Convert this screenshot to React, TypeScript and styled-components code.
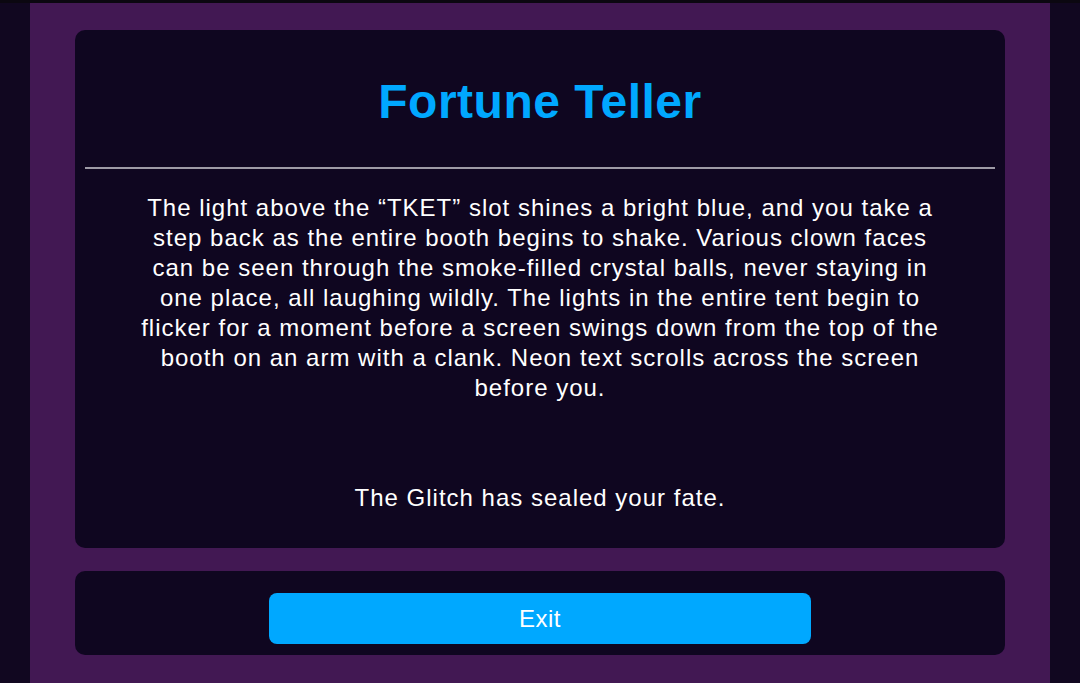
import React from 'react';
import styled, { createGlobalStyle } from 'styled-components';

const GlobalStyle = createGlobalStyle`
  html, body {
    margin: 0;
    padding: 0;
    background: #110720;
    font-family: "Liberation Sans", Arial, sans-serif;
  }
  * {
    box-sizing: border-box;
  }
`

const TopBar = styled.div`
  height: 3px;
  background: #0b0710;
`

const Frame = styled.main`
  width: 1020px;
  margin: 0 auto;
  padding: 27px 45px 0;
  height: 680px;
  overflow: hidden;
  background: #421853;
  display: flex;
  flex-direction: column;
  gap: 23px;
`

const Card = styled.section<{ $pad?: string }>`
  background: #0f0620;
  border-radius: 10px;
  padding: ${p => p.$pad || '0'};
  display: flex;
  flex-direction: column;
  align-items: center;
`

const Title = styled.h1`
  margin: 44px 0 0;
  height: 93px;
  color: #00a8ff;
  font-size: 48px;
  font-weight: 700;
  letter-spacing: 0.5px;
`

const Rule = styled.hr`
  align-self: stretch;
  margin: 0 10px;
  border: none;
  height: 2px;
  background: #9e9aa6;
`

const Story = styled.div`
  margin-top: 24px;
  color: #ffffff;
  font-size: 24px;
  line-height: 30px;
  letter-spacing: 1px;
  text-align: center;
`

const Line = styled.span`
  display: block;
  white-space: nowrap;
`

const Verdict = styled.p`
  margin: 80px 0 35px;
  color: #ffffff;
  font-size: 24px;
  line-height: 30px;
  letter-spacing: 1px;
  text-align: center;
`

const ExitButton = styled.button`
  width: 542px;
  height: 51px;
  flex-shrink: 0;
  border: none;
  border-radius: 8px;
  background: #00a8ff;
  color: #ffffff;
  font-family: inherit;
  font-size: 24px;
  letter-spacing: 0.5px;
  cursor: pointer;
`

const story = [
  'The light above the “TKET” slot shines a bright blue, and you take a',
  'step back as the entire booth begins to shake. Various clown faces',
  'can be seen through the smoke-filled crystal balls, never staying in',
  'one place, all laughing wildly. The lights in the entire tent begin to',
  'flicker for a moment before a screen swings down from the top of the',
  'booth on an arm with a clank. Neon text scrolls across the screen',
  'before you.',
]

export default function App() {
  return (
    <>
      <GlobalStyle />
      <TopBar />
      <Frame>
        <Card>
          <Title>Fortune Teller</Title>
          <Rule />
          <Story>
            {story.map(line => (
              <Line key={line}>{line}</Line>
            ))}
          </Story>
          <Verdict>The Glitch has sealed your fate.</Verdict>
        </Card>
        <Card $pad="22px 0 11px">
          <ExitButton>Exit</ExitButton>
        </Card>
      </Frame>
    </>
  )
}
